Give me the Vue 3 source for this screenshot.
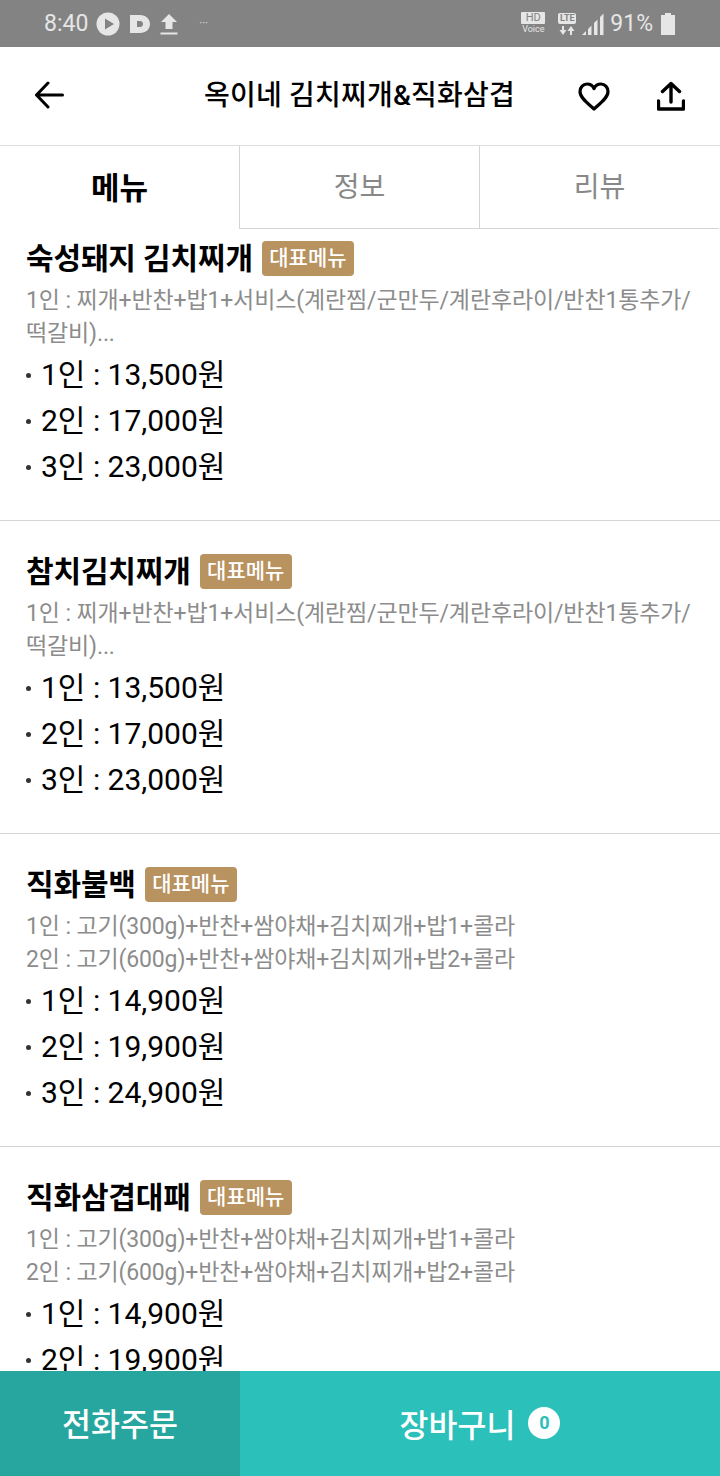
<template>
  <div class="screen">
    <div class="status-bar">
      <div class="status-left">
        <span class="clock">8:40</span>
        <svg class="st-icon" width="24" height="24" viewBox="0 0 24 24">
          <circle cx="12" cy="12" r="11.5" fill="#e6e6e6" />
          <path d="M9 6.5 L18 12 L9 17.5 Z" fill="#838383" />
        </svg>
        <svg class="st-icon" width="20" height="18" viewBox="0 0 20 18">
          <path fill-rule="evenodd" fill="#e6e6e6" d="M0 0 H10 C16 0 20 4 20 9 C20 14 16 18 10 18 H0 Z M7 6 V12 H10 C12 12 13 10.5 13 9 C13 7.500 12 6 10 6 Z" />
        </svg>
        <svg class="st-icon" width="18" height="22" viewBox="0 0 18 22">
          <path fill="#e6e6e6" d="M9 1 L17 9 H12.500 V16 H5.500 V9 H1 Z M0.500 19.500 H17.500 V21.500 H0.500 Z" />
        </svg>
        <span class="more">···</span>
      </div>
      <div class="status-right">
        <div class="hd">
          <span class="hd-box">HD</span>
          <span class="hd-voice">Voice</span>
        </div>
        <div class="lte">
          <span class="lte-box">LTE</span>
          <svg width="16" height="9" viewBox="0 0 16 9">
            <path fill="#e6e6e6" d="M3 0 H5 V4 H7.500 L4 9 L0.500 4 H3 Z M11 9 H13 V5 H15.500 L12 0 L8.500 5 H11 Z" />
          </svg>
        </div>
        <svg width="22" height="22" viewBox="0 0 22 22">
          <path fill="#e6e6e6" d="M0 22 L4 18 V22 Z M6 16 L9.500 12.500 V22 H6 Z M12 10 L15.500 6.500 V22 H12 Z M18 4 L21.500 0.500 V22 H18 Z" />
        </svg>
        <span class="battery-text">91%</span>
        <svg width="14" height="22" viewBox="0 0 14 22">
          <path fill="#e6e6e6" d="M4 0 H10 V2 H14 V22 H0 V2 H4 Z" />
        </svg>
      </div>
    </div>

    <header class="app-bar">
      <svg class="back" width="30" height="28" viewBox="0 0 30 28">
        <path d="M28.500 14 H3 M14 2 L2.500 14 L14 26" fill="none" stroke="#000" stroke-width="3" stroke-linecap="round" stroke-linejoin="round" />
      </svg>
      <h1 class="shop-name">옥이네 김치찌개&amp;직화삼겹</h1>
      <svg class="heart" width="32" height="29" viewBox="0 0 32 29">
        <path d="M16 27 C10 21.500 2 16 2 9.500 C2 5 5.300 2 9 2 C12 2 14.800 3.800 16 6.500 C17.200 3.800 20 2 23 2 C26.700 2 30 5 30 9.500 C30 16 22 21.500 16 27 Z" fill="none" stroke="#000" stroke-width="3.200" stroke-linejoin="round" />
      </svg>
      <svg class="share" width="28" height="30" viewBox="0 0 28 30">
        <path d="M14 21 V3 M5.500 10.500 L14 2.500 L22.500 10.500 M1.500 20 V28 H26.500 V20" fill="none" stroke="#000" stroke-width="3.400" stroke-linejoin="round" stroke-linecap="round" />
      </svg>
    </header>

    <nav class="tabs">
      <div v-for="(tab, i) in tabs" :key="tab" :class="['tab', { active: i === 0 }]">{{ tab }}</div>
    </nav>

    <main class="list">
      <section v-for="item in items" :key="item.name" class="item">
        <div class="title-row">
          <h2 class="item-name">{{ item.name }}</h2>
          <span class="badge">대표메뉴</span>
        </div>
        <p class="desc">{{ item.desc }}</p>
        <ul class="prices">
          <li v-for="p in item.prices" :key="p"><span class="dot"></span>{{ p }}</li>
        </ul>
      </section>
    </main>

    <footer class="bottom">
      <div class="call">전화주문</div>
      <div class="cart"><span>장바구니</span><span class="count">0</span></div>
    </footer>
  </div>
</template>

<script setup>
const tabs = ['메뉴', '정보', '리뷰']

const stewDesc = '1인 : 찌개+반찬+밥1+서비스(계란찜/군만두/계란후라이/반찬1통추가/떡갈비)...'
const meatDesc = '1인 : 고기(300g)+반찬+쌈야채+김치찌개+밥1+콜라\n2인 : 고기(600g)+반찬+쌈야채+김치찌개+밥2+콜라'
const stewPrices = ['1인 : 13,500원', '2인 : 17,000원', '3인 : 23,000원']
const meatPrices = ['1인 : 14,900원', '2인 : 19,900원', '3인 : 24,900원']

const items = [
  { name: '숙성돼지 김치찌개', desc: stewDesc, prices: stewPrices },
  { name: '참치김치찌개', desc: stewDesc, prices: stewPrices },
  { name: '직화불백', desc: meatDesc, prices: meatPrices },
  { name: '직화삼겹대패', desc: meatDesc, prices: meatPrices }
]
</script>

<style>
html, body { margin: 0; padding: 0; background: #fff; }
</style>

<style scoped>
.screen { width: 720px; height: 1476px; overflow: hidden; display: flex; flex-direction: column; background: #fff; font-family: Roboto, "Noto Sans CJK KR", sans-serif; color: #000; }

.status-bar { flex: none; height: 47px; background: #838383; display: flex; justify-content: space-between; align-items: center; padding: 0 45px 0 44px; color: #e6e6e6; box-sizing: border-box; }
.status-left, .status-right { display: flex; align-items: center; }
.clock { font-size: 23px; margin-right: 8px; }
.st-icon { margin-right: 10px; }
.more { font-size: 11px; margin-left: 11px; }
.hd { display: flex; flex-direction: column; align-items: center; width: 24px; margin-right: 13px; }
.hd-box { width: 24px; height: 12px; background: #e6e6e6; color: #838383; font-size: 11px; line-height: 12px; text-align: center; border-radius: 1px; }
.hd-voice { font-size: 9px; line-height: 11px; }
.lte { display: flex; flex-direction: column; align-items: center; margin-right: 6px; width: 18px; gap: 2px; }
.lte-box { width: 18px; height: 11px; background: #e6e6e6; color: #838383; font-size: 9px; line-height: 11px; font-weight: 700; text-align: center; border-radius: 2px; }
.battery-text { font-size: 23px; margin: 0 8px 0 6px; }

.app-bar { flex: none; height: 99px; display: flex; align-items: center; box-sizing: border-box; border-bottom: 1px solid #dcdcdc; padding: 0 34px; }
.shop-name { margin: 0 0 0 140px; font-size: 28px; font-weight: 500; line-height: 40px; white-space: nowrap; letter-spacing: 0.2px; }
.back { margin-top: -2px; }
.heart { margin-left: 63px; }
.share { margin-left: 47px; }

.tabs { flex: none; display: flex; height: 83px; position: relative; z-index: 1; background: #fff; }
.tab { width: 240px; box-sizing: border-box; display: flex; align-items: center; justify-content: center; padding-bottom: 4px; font-size: 28px; color: #888; border-left: 1px solid #d4d4d4; border-bottom: 1px solid #d4d4d4; }
.tab.active { width: 239px; color: #000; font-size: 31px; font-weight: 700; border-left: none; border-bottom: none; }

.list { flex: 1; min-height: 0; overflow: hidden; margin-top: -21px; }
.item { height: 313px; box-sizing: border-box; padding: 31px 26px 0; border-bottom: 1px solid #d4d4d4; }
.title-row { display: flex; align-items: center; height: 38px; }
.item-name { margin: 0; font-size: 30px; font-weight: 700; line-height: 38px; letter-spacing: -0.15px; position: relative; top: 1px; }
.badge { margin-left: 9px; width: 92px; height: 35px; line-height: 35px; text-align: center; background: #b8925f; color: #fff; font-size: 21px; font-weight: 500; border-radius: 4px; }
.desc { margin: 7px 0 0; height: 66px; font-size: 23px; line-height: 33px; color: #8c8c8c; white-space: pre-line; word-break: break-all; letter-spacing: -0.13px; }
.prices { list-style: none; margin: 1px 0 0; padding: 0; }
.prices li { display: flex; align-items: center; height: 46px; box-sizing: border-box; padding-bottom: 5px; font-size: 30px; color: #000; }
.dot { width: 5px; height: 5px; border-radius: 50%; background: #333; margin: 7px 10px 0 0; }

.bottom { flex: none; height: 105px; display: flex; position: relative; color: #fff; font-size: 31.5px; font-weight: 500; }
.call { width: 240px; background: #26a69e; display: flex; align-items: center; justify-content: center; padding-bottom: 4px; box-sizing: border-box; }
.cart { flex: 1; background: #2bc0b9; display: flex; align-items: center; justify-content: center; gap: 13px; padding-bottom: 2px; box-sizing: border-box; }
.count { width: 32px; height: 32px; border-radius: 50%; background: #fff; color: #2bc0b9; font-size: 18px; font-weight: 700; display: flex; align-items: center; justify-content: center; }
</style>
